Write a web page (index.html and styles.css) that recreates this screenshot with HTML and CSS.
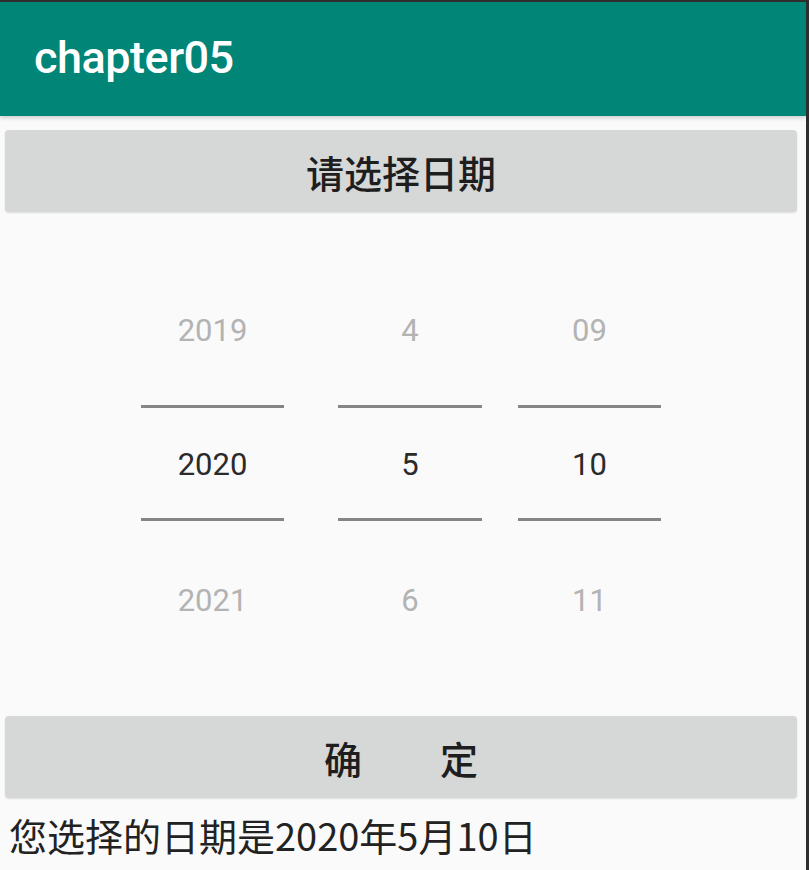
FILE: index.html
```html
<!DOCTYPE html>
<html lang="zh">
<head>
<meta charset="utf-8">
<title>chapter05</title>
<link rel="stylesheet" href="styles.css">
</head>
<body>
<div class="screen">
  <header class="appbar"><span class="title">chapter05</span></header>
  <main class="content">
    <div class="btn btn-top">请选择日期</div>
    <div class="picker">
      <div class="col col-year">
        <div class="cell cell-prev dim">2019</div>
        <div class="line"></div>
        <div class="cell cell-cur">2020</div>
        <div class="line"></div>
        <div class="cell cell-next dim">2021</div>
      </div>
      <div class="col col-month">
        <div class="cell cell-prev dim">4</div>
        <div class="line"></div>
        <div class="cell cell-cur">5</div>
        <div class="line"></div>
        <div class="cell cell-next dim">6</div>
      </div>
      <div class="col col-day">
        <div class="cell cell-prev dim">09</div>
        <div class="line"></div>
        <div class="cell cell-cur">10</div>
        <div class="line"></div>
        <div class="cell cell-next dim">11</div>
      </div>
    </div>
    <div class="btn btn-ok"><span>确</span><span>定</span></div>
    <p class="result">您选择的日期是2020年5月10日</p>
  </main>
</div>
</body>
</html>
```
FILE: styles.css
```css
html, body {
  margin: 0;
  padding: 0;
  background: #fafafa;
}
.screen {
  width: 806px;
  height: 868px;
  border-top: 2px solid #2e2e2e;
  border-right: 3px solid #2e2e2e;
  background: #fafafa;
  overflow: hidden;
  font-family: Roboto, "Noto Sans CJK SC", sans-serif;
}
.appbar {
  height: 114px;
  background: #008577;
  display: flex;
  align-items: center;
  padding-left: 34px;
  box-shadow: 0 2px 4px rgba(0, 0, 0, 0.18);
  position: relative;
}
.title {
  color: #ffffff;
  font-family: Roboto, sans-serif;
  font-weight: 500;
  font-size: 45px;
  letter-spacing: -0.5px;
  margin-top: -4px;
}
.content {
  padding: 14px 9px 0 5px;
}
.btn {
  height: 82px;
  background: #d6d7d7;
  border-radius: 4px;
  box-shadow: 0 1px 2px rgba(0, 0, 0, 0.12);
  display: flex;
  align-items: center;
  justify-content: center;
  font-family: "Noto Sans CJK SC", sans-serif;
  font-size: 38px;
  font-weight: 500;
  color: #1e1e1e;
}
.picker {
  display: flex;
  justify-content: center;
  padding-top: 51px;
  margin-bottom: 49px;
}
.col {
  width: 143px;
  display: flex;
  flex-direction: column;
  align-items: stretch;
}
.col-month { margin-left: 54px; width: 144px; }
.col-day { margin-left: 36px; }
.cell {
  display: flex;
  align-items: center;
  justify-content: center;
  font-family: Roboto, sans-serif;
  font-size: 31px;
  color: #2b2b2b;
}
.cell-prev { height: 134px; margin-bottom: 8px; }
.cell-cur { height: 110px; padding-top: 2px; box-sizing: border-box; }
.cell-next { height: 134px; margin-top: 12px; }
.dim { color: #b3b3b3; }
.line {
  height: 3px;
  background: #858585;
}
.btn-ok span + span { margin-left: 78px; }
.result {
  margin: 13px 0 0 4px;
  font-family: "Noto Sans CJK SC", sans-serif;
  font-size: 38px;
  color: #222222;
  line-height: 48px;
}
```
